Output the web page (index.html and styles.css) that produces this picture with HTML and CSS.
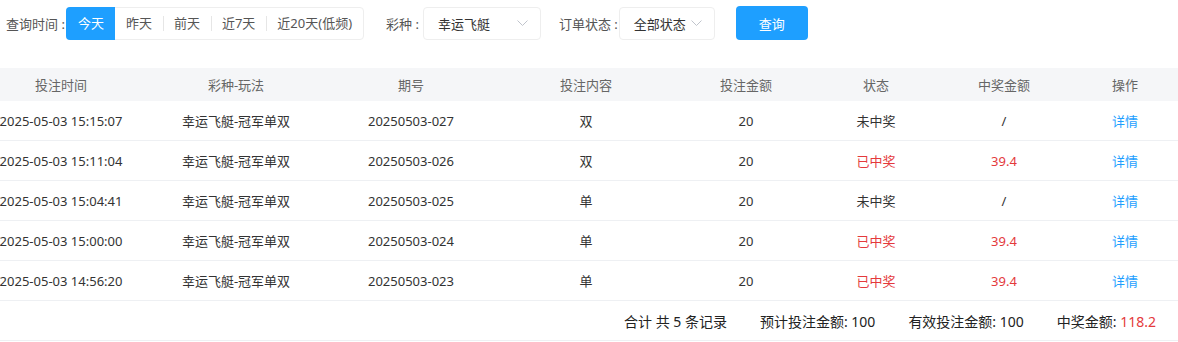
FILE: index.html
```html
<!DOCTYPE html>
<html lang="zh-CN">
<head>
  <meta charset="UTF-8" />
  <meta name="viewport" content="width=device-width, initial-scale=1.0" />
  <title>投注记录</title>
  <link rel="stylesheet" href="styles.css">
</head>
<body>
  <!-- 查询条件 -->
  <div class="filters">
    <span class="label">查询时间 :</span>
    <div class="btn-group">
      <span class="seg active">今天</span>
      <span class="seg">昨天</span>
      <span class="seg">前天</span>
      <span class="seg">近7天</span>
      <span class="seg">近20天(低频)</span>
    </div>

    <span class="label lottery-label">彩种 :</span>
    <div class="select lottery">
      <span>幸运飞艇</span>
      <svg class="arrow" width="11" height="6" viewBox="0 0 11 6"><polyline points="0.5,0.5 5.5,5.5 10.5,0.5" fill="none" stroke="#c0c4cc" stroke-width="1"/></svg>
    </div>

    <span class="label status-label">订单状态 :</span>
    <div class="select status">
      <span>全部状态</span>
      <svg class="arrow" width="11" height="6" viewBox="0 0 11 6"><polyline points="0.5,0.5 5.5,5.5 10.5,0.5" fill="none" stroke="#c0c4cc" stroke-width="1"/></svg>
    </div>

    <button class="search-btn">查询</button>
  </div>

  <!-- 投注列表 -->
  <div class="table">
    <div class="row head">
      <div>投注时间</div>
      <div>彩种-玩法</div>
      <div>期号</div>
      <div>投注内容</div>
      <div>投注金额</div>
      <div>状态</div>
      <div>中奖金额</div>
      <div>操作</div>
    </div>
    <div class="row">
      <div>2025-05-03 15:15:07</div>
      <div>幸运飞艇-冠军单双</div>
      <div>20250503-027</div>
      <div>双</div>
      <div>20</div>
      <div>未中奖</div>
      <div>/</div>
      <div><a class="link">详情</a></div>
    </div>
    <div class="row">
      <div>2025-05-03 15:11:04</div>
      <div>幸运飞艇-冠军单双</div>
      <div>20250503-026</div>
      <div>双</div>
      <div>20</div>
      <div class="win">已中奖</div>
      <div class="win">39.4</div>
      <div><a class="link">详情</a></div>
    </div>
    <div class="row">
      <div>2025-05-03 15:04:41</div>
      <div>幸运飞艇-冠军单双</div>
      <div>20250503-025</div>
      <div>单</div>
      <div>20</div>
      <div>未中奖</div>
      <div>/</div>
      <div><a class="link">详情</a></div>
    </div>
    <div class="row">
      <div>2025-05-03 15:00:00</div>
      <div>幸运飞艇-冠军单双</div>
      <div>20250503-024</div>
      <div>单</div>
      <div>20</div>
      <div class="win">已中奖</div>
      <div class="win">39.4</div>
      <div><a class="link">详情</a></div>
    </div>
    <div class="row">
      <div>2025-05-03 14:56:20</div>
      <div>幸运飞艇-冠军单双</div>
      <div>20250503-023</div>
      <div>单</div>
      <div>20</div>
      <div class="win">已中奖</div>
      <div class="win">39.4</div>
      <div><a class="link">详情</a></div>
    </div>

    <!-- 合计 -->
    <div class="summary">
      <span>合计 共 5 条记录</span>
      <span>预计投注金额: 100</span>
      <span>有效投注金额: 100</span>
      <span>中奖金额: <em class="win">118.2</em></span>
    </div>
  </div>
</body>
</html>
```

FILE: styles.css
```css
body {
  margin: 0;
  font-family: "Noto Sans", "Noto Sans CJK SC", sans-serif;
  font-size: 13px;
  color: #333;
  background: #fff;
}
.filters {
  display: flex;
  align-items: center;
  height: 34px;
  padding: 6px 0 0 6px;
}
.label {
  color: #555;
  margin-right: 1px;
  white-space: nowrap;
}
.btn-group {
  display: flex;
  height: 33px;
  border: 1px solid #eee;
  border-radius: 4px;
  box-sizing: border-box;
  align-items: center;
}
.seg {
  position: relative;
  padding: 0 11px;
  line-height: 33px;
  color: #555;
}
.seg + .seg::before {
  content: "";
  position: absolute;
  left: 0;
  top: 9px;
  height: 15px;
  border-left: 1px solid #e6e6e6;
}
.seg.active {
  background: #1e9fff;
  color: #fff;
  border-radius: 4px 0 0 4px;
  margin: -1px 0 -1px -1px;
  padding: 0 11px 0 12px;
}
.seg.active + .seg::before {
  display: none;
}
.lottery-label {
  margin-left: 22px;
}
.status-label {
  margin-left: 18px;
}
.select {
  display: flex;
  align-items: center;
  justify-content: space-between;
  height: 33px;
  box-sizing: border-box;
  border: 1px solid #eee;
  border-radius: 4px;
  padding: 0 12px 0 14px;
  margin-left: 3px;
}
.select.lottery {
  width: 118px;
}
.select.status {
  width: 96px;
  margin-left: 0;
}
.arrow {
  display: block;
}
.search-btn {
  margin-left: 21px;
  width: 72px;
  height: 34px;
  border: none;
  border-radius: 4px;
  background: #1e9fff;
  color: #fff;
  font-family: inherit;
  font-size: 13px;
  cursor: pointer;
}
.table {
  margin-top: 28px;
}
.row {
  display: grid;
  grid-template-columns: 146px 180px 170px 180px 140px 120px 136px 106px;
  justify-items: center;
  align-items: center;
  height: 40px;
  border-bottom: 1px solid #eef0f3;
  box-sizing: border-box;
  white-space: nowrap;
}
.row > div:first-child {
  margin-right: 24px;
}
.row.head {
  height: 33px;
  background: #f5f6f8;
  color: #666;
  border-bottom: none;
}
.win {
  color: #e4393c;
}
.link {
  color: #1e9fff;
  cursor: pointer;
}
.summary {
  display: flex;
  justify-content: flex-end;
  align-items: center;
  gap: 33px;
  height: 40px;
  padding-right: 22px;
  font-size: 14px;
  color: #222;
  border-bottom: 1px solid #eef0f3;
  box-sizing: border-box;
}
.summary em {
  font-style: normal;
}
```
